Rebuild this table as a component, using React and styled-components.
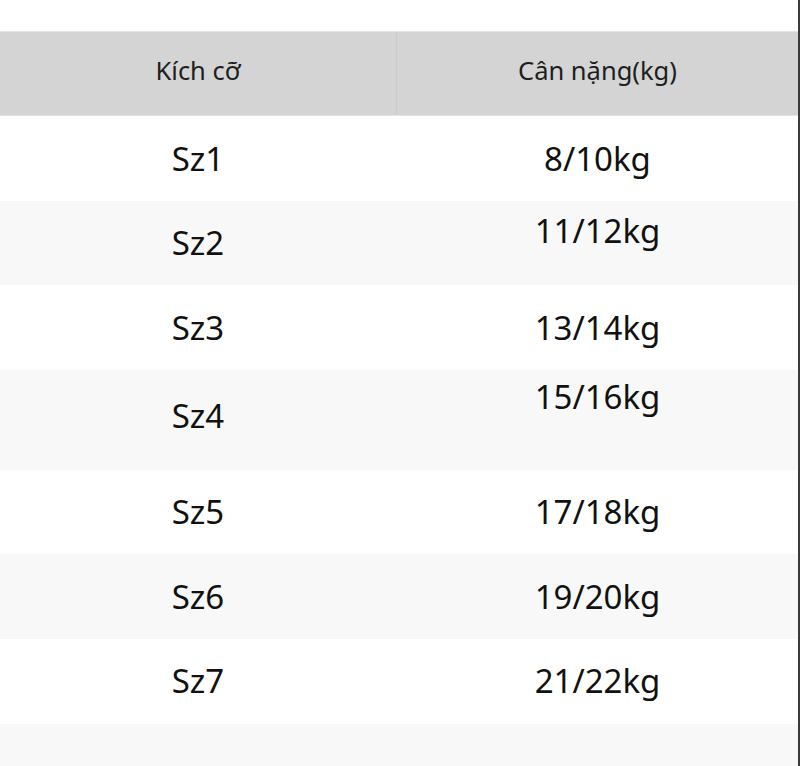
import React from "react";
import styled, { createGlobalStyle } from "styled-components";

const GlobalStyle = createGlobalStyle`
  html, body {
    margin: 0;
    padding: 0;
    background: #fff;
  }
  body {
    font-family: "Noto Sans", "Open Sans", sans-serif;
  }
`;

const Page = styled.div`
  width: 800px;
  height: 766px;
  overflow: hidden;
  box-sizing: border-box;
  padding-top: 31.33px;
  border-right: 2px solid #3a3a3a;
`;

const Table = styled.div`
  width: 100%;
  display: flex;
  flex-direction: column;
`;

const Row = styled.div`
  display: grid;
  grid-template-columns: 397px 1fr;
  min-height: 84.67px;
  background: ${(p) => (p.$header ? "#d4d4d4" : p.$striped ? "#f8f8f8" : "#fff")};
  border-top: ${(p) => (p.$header ? "1px solid #e4e4e4" : "none")};
  border-bottom: ${(p) => (p.$header ? "1px solid #e4e4e4" : "none")};
  box-sizing: border-box;
`;

const Cell = styled.div`
  display: flex;
  align-items: center;
  justify-content: center;
  box-sizing: border-box;
  padding: ${(p) => p.$top ?? 10}px 0 ${(p) => 10 + (p.$trail || 0)}px;
  border-right: 1px solid ${(p) => (p.$header ? "#cacaca" : "transparent")};
  font-size: ${(p) => (p.$header ? "25.5px" : "33px")};
  color: ${(p) => (p.$header ? "#1e1e1e" : "#111")};
  line-height: 1.2;

  &:last-child {
    border-right: none;
  }
`;

const rows = [
  { size: "Sz1", weight: "8/10kg" },
  { size: "Sz2", weight: "11/12kg", trail: 24 },
  { size: "Sz3", weight: "13/14kg" },
  { size: "Sz4", weight: "15/16kg", top: 7, trail: 43, sizeTrail: 8 },
  { size: "Sz5", weight: "17/18kg" },
  { size: "Sz6", weight: "19/20kg" },
  { size: "Sz7", weight: "21/22kg" },
  { size: "", weight: "" },
];

export default function App() {
  return (
    <>
      <GlobalStyle />
      <Page>
        <Table>
          <Row $header>
            <Cell $header $trail={6}>Kích cỡ</Cell>
            <Cell $header $trail={6}>Cân nặng(kg)</Cell>
          </Row>
          {rows.map((r, i) => (
            <Row key={i} $striped={i % 2 === 1}>
              <Cell $trail={r.sizeTrail}>{r.size}</Cell>
              <Cell $top={r.top} $trail={r.trail}>{r.weight}</Cell>
            </Row>
          ))}
        </Table>
      </Page>
    </>
  );
}
